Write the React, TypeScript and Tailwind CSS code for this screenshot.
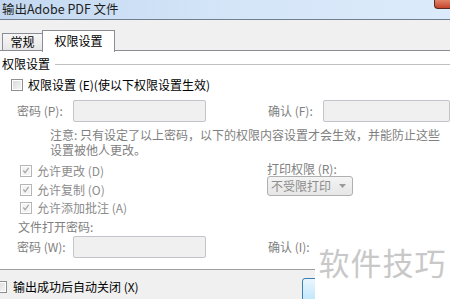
import React from "react";

const F = { fontFamily: '"Noto Sans CJK SC", "Liberation Sans", sans-serif' };

function Box({ checked, disabled }: { checked?: boolean; disabled?: boolean }) {
  return (
    <div
      className={`w-[12px] h-[12px] shrink-0 border ${disabled ? "border-[#b5b5b5]" : "border-[#8f8f8f]"} bg-white flex items-center justify-center`}
    >
      <div className={`w-[8px] h-[8px] ${disabled ? "bg-[#f4f4f4]" : "bg-gradient-to-br from-[#dcdcdc] to-[#f4f4f4]"} flex items-center justify-center`}>
        {checked && (
          <svg width="9" height="9" viewBox="0 0 9 9">
            <path d="M1.5 4.5 L3.5 7 L7.5 1.5" stroke="#a8a8a8" strokeWidth="1.4" fill="none" />
          </svg>
        )}
      </div>
    </div>
  );
}

function Input({ w }: { w: string }) {
  return <div className={`${w} h-[22px] border border-[#c2c4ca] rounded-[2px] bg-[#f0f0f0]`} />;
}

export default function App() {
  return (
    <div className="w-[450px] h-[299px] overflow-hidden relative bg-[#f0f0f0] text-[12px] leading-[14px]" style={F}>
      {/* title bar */}
      <div className="h-[20px] relative bg-gradient-to-r from-[#c3d8f0] via-[#d4e5f8] to-[#dcebfb] border-b border-[#6f7f8f] flex items-start pl-[2px] pt-[3px]">
        <span className="text-[12.5px] text-[#1e1e1e] leading-[12px]">输出Adobe PDF 文件</span>
        <div className="absolute right-0 top-0 w-[16px] h-[9px] rounded-bl-[4px] border-l border-b border-[#5a2a20] bg-gradient-to-b from-[#e0836a] to-[#c4442a]" />
      </div>
      {/* tab strip */}
      <div className="h-[31px] flex items-end">
        <div className="w-[2px] border-b border-[#898c95] h-[1px]" />
        <div className="w-[40px] h-[18px] border border-[#898c95] border-r-0 bg-gradient-to-b from-[#f7f7f7] to-[#e6e6e6] flex items-center justify-center text-black">
          常规
        </div>
        <div className="w-[73px] h-[22px] border border-[#898c95] border-b-0 bg-white flex items-center justify-center text-black -mb-[1px] relative z-10 pb-[2px]">
          权限设置
        </div>
        <div className="flex-1 border-b border-[#898c95] h-[1px]" />
      </div>
      {/* panel */}
      <div className="h-[219px] bg-white border-b border-[#a0a0a0] flex flex-col">
        <div className="mt-[6px] h-[13px] flex items-center pl-[2px]">
          <span className="text-black">权限设置</span>
          <div className="flex-1 ml-[5px] border-t border-[#c0c0c0] mt-[1px]" />
        </div>
        <div className="mt-[8px] h-[13px] flex items-center pl-[11px]">
          <Box />
          <span className="ml-[5px] text-black">权限设置 (E)(使以下权限设置生效)</span>
        </div>
        <div className="mt-[8px] h-[23px] flex items-center text-[#808080]">
          <span className="ml-[17px] w-[56px]">密码 (P):</span>
          <Input w="w-[133px]" />
          <span className="ml-[62px] w-[55px]">确认 (F):</span>
          <Input w="flex-1" />
        </div>
        <div className="mt-[5px] ml-[50px] text-[#808080] leading-[15px]">
          <div>注意: 只有设定了以上密码，以下的权限内容设置才会生效，并能防止这些</div>
          <div>设置被他人更改。</div>
        </div>
        <div className="mt-[4px] flex">
          <div className="w-[267px] flex flex-col text-[#8c8c8c]">
            <div className="h-[13px] mt-[3px] flex items-center pl-[20px]">
              <Box checked disabled />
              <span className="ml-[5px]">允许更改 (D)</span>
            </div>
            <div className="h-[13px] mt-[6px] flex items-center pl-[20px]">
              <Box checked disabled />
              <span className="ml-[5px]">允许复制 (O)</span>
            </div>
            <div className="h-[13px] mt-[5px] flex items-center pl-[20px]">
              <Box checked disabled />
              <span className="ml-[5px]">允许添加批注 (A)</span>
            </div>
          </div>
          <div className="flex flex-col text-[#808080]">
            <div className="h-[13px] mt-[1px] flex items-center">打印权限 (R):</div>
            <div className="mt-[1px] w-[86px] h-[20px] border border-[#b0b0b0] rounded-[3px] bg-gradient-to-b from-[#f4f4f4] to-[#e6e6e6] flex items-center pl-[3px] text-[#8c8c8c]">
              <span className="flex-1">不受限打印</span>
              <svg width="7" height="4" viewBox="0 0 7 4" className="mr-[6px]">
                <path d="M0 0 L7 0 L3.5 4 Z" fill="#9a9a9a" />
              </svg>
            </div>
          </div>
        </div>
        <div className="mt-[6px] ml-[18px] h-[13px] text-[#808080] flex items-center">文件打开密码:</div>
        <div className="mt-[2px] h-[23px] flex items-center text-[#808080]">
          <span className="ml-[17px] w-[56px]">密码 (W):</span>
          <Input w="w-[133px]" />
          <span className="ml-[62px] w-[55px]">确认 (I):</span>
          <Input w="flex-1" />
        </div>
      </div>
      {/* footer */}
      <div className="h-[29px] flex items-start">
        <div className="mt-[10px] h-[13px] flex items-center -ml-[5px]">
          <Box />
          <span className="ml-[6px] text-black">输出成功后自动关闭 (X)</span>
        </div>
        <div className="ml-auto mr-[108px] mt-[8px] w-[40px] h-[24px] rounded-[3px] border border-[#3c7fb1] bg-gradient-to-b from-[#eaf6fd] to-[#bee6fd]" />
      </div>
      {/* watermark */}
      <div className="absolute left-[315px] top-[232px] w-[135px] h-[67px] bg-white flex items-start justify-center pt-[12px]">
        <span className="text-[31px] leading-[36px] text-[#c8c8c8] tracking-[1px]">软件技巧</span>
      </div>
    </div>
  );
}
